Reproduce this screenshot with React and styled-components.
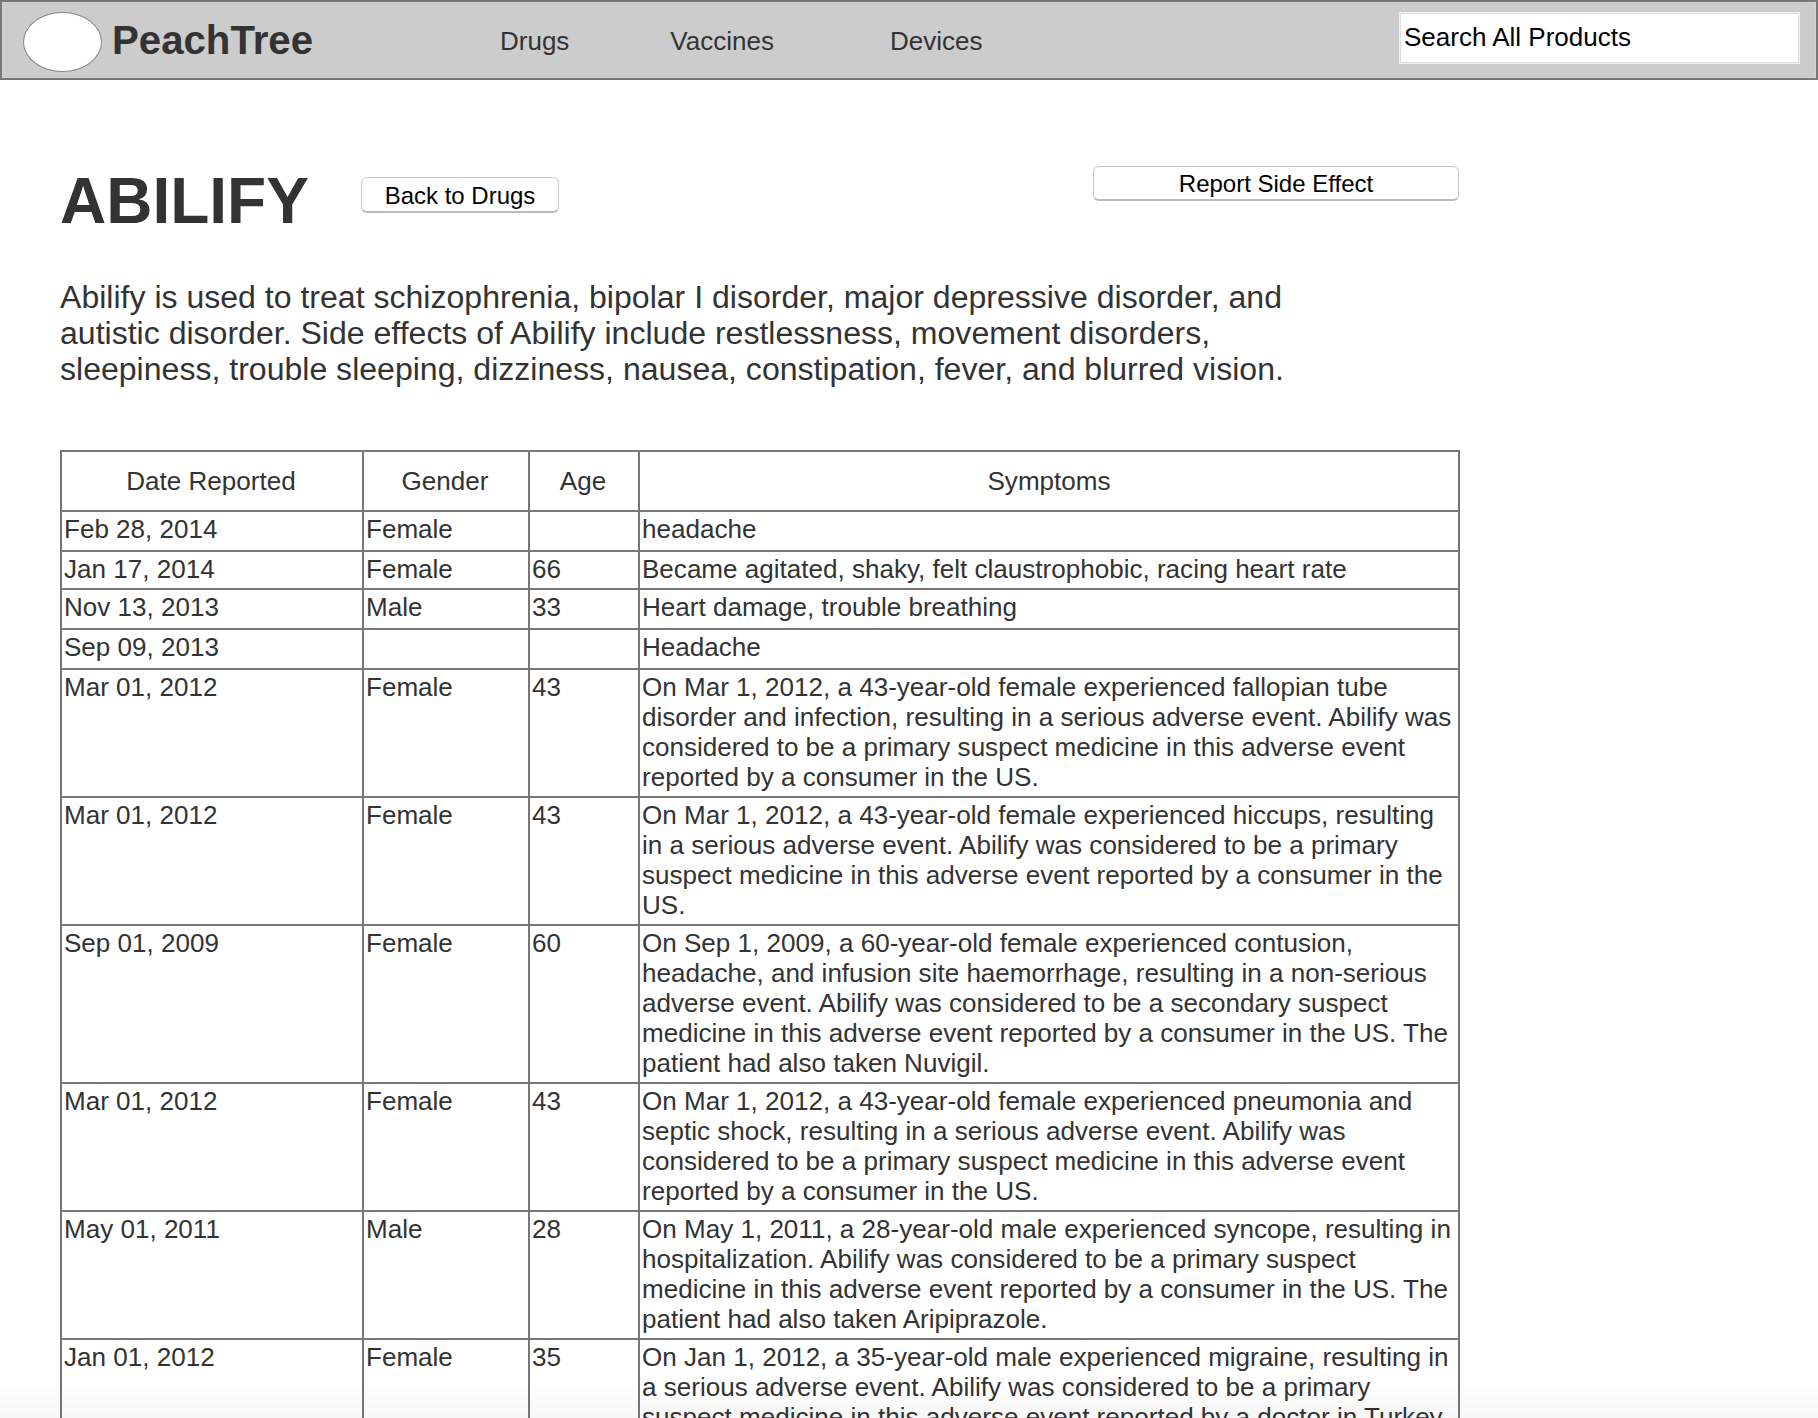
import React from 'react'
import styled, { createGlobalStyle } from 'styled-components'

const GlobalStyle = createGlobalStyle`
  html, body {
    margin: 0;
    padding: 0;
    background: #fff;
    overflow: hidden;
    height: 1418px;
  }
  body {
    font-family: "Liberation Sans", Arial, sans-serif;
    color: #333;
  }
  /* faint fade along the bottom edge of the window */
  body::after {
    content: "";
    position: fixed;
    left: 0;
    right: 0;
    bottom: 0;
    height: 34px;
    background: linear-gradient(rgba(0, 0, 0, 0), rgba(0, 0, 0, 0.035));
    pointer-events: none;
  }
`

const NavBar = styled.header`
  box-sizing: border-box;
  height: 80px;
  display: flex;
  align-items: center;
  background: #ccc;
  border: 2px solid #777;
  box-shadow: inset 0 0 0 1px #d4d4d4;
  padding: 0 18px 0 21px;
`

const Logo = styled.div`
  width: 79px;
  height: 60px;
  margin-top: 4px;
  box-sizing: border-box;
  background: #fff;
  border: 1px solid #888;
  border-radius: 50%;
`

const Brand = styled.div`
  font-size: 40.2px;
  font-weight: 700;
  margin-left: 10px;
  padding-top: 2px;
  width: 388px;
  color: #333;
`

const NavLink = styled.a`
  font-size: 26px;
  padding-top: 2px;
  color: #333;
  margin-right: ${(p) => p.$gap}px;
`

const Search = styled.div`
  box-sizing: border-box;
  margin-left: auto;
  margin-right: -1px;
  margin-bottom: 5px;
  width: 399px;
  height: 50px;
  background: #fff;
  border: 1px solid #ddd;
  box-shadow: 0 0 0 1px #f0f0f0;
  padding-left: 3px;
  line-height: 46px;
  font-size: 26px;
  color: #000;
`

const Content = styled.main`
  width: 1400px;
  margin-left: 60px;
`

const TitleRow = styled.div`
  display: flex;
  align-items: flex-start;
  height: 156px;
  padding-top: 86px;
  box-sizing: border-box;
  margin-bottom: 43px;
`

const Title = styled.h1`
  margin: 0;
  font-size: 64px;
  line-height: 70px;
  font-weight: 700;
  color: #333;
  width: 301px;
`

const Button = styled.button`
  box-sizing: border-box;
  width: ${(p) => p.$width}px;
  height: ${(p) => p.$height}px;
  margin-top: ${(p) => p.$top}px;
  margin-left: ${(p) => p.$left || 0}px;
  background: #fff;
  border: 1px solid #ccc;
  border-bottom: 2px solid #bbb;
  border-radius: 6px;
  font-family: inherit;
  font-size: 24px;
  color: #000;
  padding: ${(p) => p.$pad}px 0 0;
`

const Description = styled.p`
  margin: 0 0 63px;
  font-size: 32.06px;
  line-height: 36px;
  width: 1240px;
  color: #333;
`

const Table = styled.table`
  border-collapse: collapse;
  table-layout: fixed;
  width: 1400px;
  font-size: 26.05px;
  line-height: 30px;
  color: #333;
`

const HeadCell = styled.th`
  border: 2px solid #777;
  font-weight: 400;
  height: 58px;
  padding: 0 ${(p) => (p.$width ? 2 : 0)}px 0 0;
  width: ${(p) => p.$width}px;
`

const Row = styled.tr`
  height: ${(p) => (p.$tall ? '40px' : 'auto')};
`

const Cell = styled.td`
  border: 2px solid #777;
  padding: 2px 3px 4px 2px;
  vertical-align: top;
`

const rows = [
  ['Feb 28, 2014', 'Female', '', 'headache'],
  ['Jan 17, 2014', 'Female', '66', 'Became agitated, shaky, felt claustrophobic, racing heart rate'],
  ['Nov 13, 2013', 'Male', '33', 'Heart damage, trouble breathing'],
  ['Sep 09, 2013', '', '', 'Headache'],
  ['Mar 01, 2012', 'Female', '43', 'On Mar 1, 2012, a 43-year-old female experienced fallopian tube disorder and infection, resulting in a serious adverse event. Abilify was considered to be a primary suspect medicine in this adverse event reported by a consumer in the US.'],
  ['Mar 01, 2012', 'Female', '43', 'On Mar 1, 2012, a 43-year-old female experienced hiccups, resulting in a serious adverse event. Abilify was considered to be a primary suspect medicine in this adverse event reported by a consumer in the US.'],
  ['Sep 01, 2009', 'Female', '60', 'On Sep 1, 2009, a 60-year-old female experienced contusion, headache, and infusion site haemorrhage, resulting in a non-serious adverse event. Abilify was considered to be a secondary suspect medicine in this adverse event reported by a consumer in the US. The patient had also taken Nuvigil.'],
  ['Mar 01, 2012', 'Female', '43', 'On Mar 1, 2012, a 43-year-old female experienced pneumonia and septic shock, resulting in a serious adverse event. Abilify was considered to be a primary suspect medicine in this adverse event reported by a consumer in the US.'],
  ['May 01, 2011', 'Male', '28', 'On May 1, 2011, a 28-year-old male experienced syncope, resulting in hospitalization. Abilify was considered to be a primary suspect medicine in this adverse event reported by a consumer in the US. The patient had also taken Aripiprazole.'],
  ['Jan 01, 2012', 'Female', '35', 'On Jan 1, 2012, a 35-year-old male experienced migraine, resulting in a serious adverse event. Abilify was considered to be a primary suspect medicine in this adverse event reported by a doctor in Turkey.'],
]

export default function App() {
  return (
    <>
      <GlobalStyle />
      <NavBar>
        <Logo />
        <Brand>PeachTree</Brand>
        <NavLink $gap={101}>Drugs</NavLink>
        <NavLink $gap={116}>Vaccines</NavLink>
        <NavLink $gap={0}>Devices</NavLink>
        <Search>Search All Products</Search>
      </NavBar>
      <Content>
        <TitleRow>
          <Title>ABILIFY</Title>
          <Button $width={198} $height={36} $top={11} $pad={3}>Back to Drugs</Button>
          <Button $width={366} $height={35} $top={0} $left={534} $pad={2}>Report Side Effect</Button>
        </TitleRow>
        <Description>
          Abilify is used to treat schizophrenia, bipolar I disorder, major depressive disorder, and
          autistic disorder. Side effects of Abilify include restlessness, movement disorders,
          sleepiness, trouble sleeping, dizziness, nausea, constipation, fever, and blurred vision.
        </Description>
        <Table>
          <thead>
            <tr>
              <HeadCell $width={298}>Date Reported</HeadCell>
              <HeadCell $width={162}>Gender</HeadCell>
              <HeadCell $width={106}>Age</HeadCell>
              <HeadCell>Symptoms</HeadCell>
            </tr>
          </thead>
          <tbody>
            {rows.map((row, i) => (
              <Row key={i} $tall={i === 0 || i === 2 || i === 3}>
                {row.map((value, j) => (
                  <Cell key={j}>{value}</Cell>
                ))}
              </Row>
            ))}
          </tbody>
        </Table>
      </Content>
    </>
  )
}
